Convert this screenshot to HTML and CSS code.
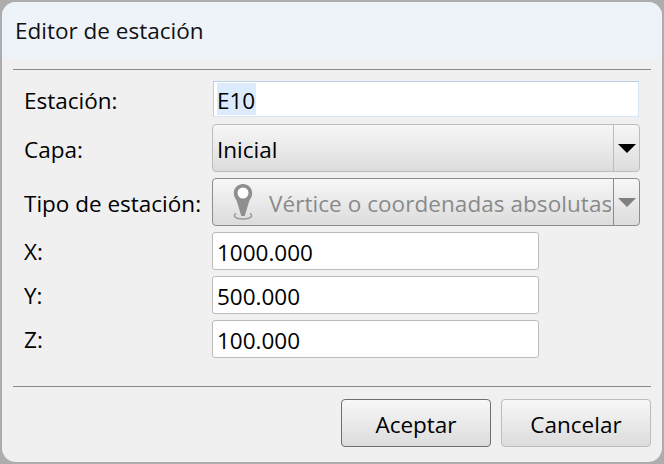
FILE: index.html
```html
<!DOCTYPE html>
<html lang="es">

<head>
    <meta charset="UTF-8">
    <title>Editor de estación</title>
    <link rel="stylesheet" href="styles.css">
</head>

<body>
    <div class="dialog">
        <div class="dialog-title">Editor de estación</div>

        <div class="dialog-body">
            <hr class="rule">

            <div class="form">
                <label class="field-label">Estación:</label>
                <div class="station-input"><span class="selected-text">E10</span></div>

                <label class="field-label field-label-tall">Capa:</label>
                <div class="combo">
                    <span class="combo-value">Inicial</span>
                    <span class="combo-arrow"><span class="arrow"></span></span>
                </div>

                <label class="field-label field-label-tall">Tipo de estación:</label>
                <div class="combo combo-disabled">
                    <span class="combo-value">
                        <svg class="pin" width="24" height="38" viewBox="0 0 24 38">
                            <path d="M12 1C6.800 1 2.800 5 2.800 10.200c0 3 1.300 5 2.800 7.300L10.300 33h3.400l4.700-15.500c1.500-2.300 2.800-4.300 2.800-7.300C21.200 5 17.200 1 12 1z" fill="#8f8f8f"/>
                            <circle cx="12" cy="10" r="5.500" fill="#fff"/>
                            <path d="M5 30.500c-2.800 1.400-2.500 5.500 7 5.500s9.800-4.100 7-5.500" fill="none" stroke="#9c9c9c" stroke-width="1.500"/>
                        </svg>
                        <span class="combo-text">Vértice o coordenadas absolutas</span>
                    </span>
                    <span class="combo-arrow"><span class="arrow"></span></span>
                </div>

                <label class="field-label">X:</label>
                <div class="number-input">1000.000</div>

                <label class="field-label">Y:</label>
                <div class="number-input">500.000</div>

                <label class="field-label">Z:</label>
                <div class="number-input">100.000</div>
            </div>

            <hr class="rule rule-bottom">

            <div class="buttons">
                <button class="btn btn-default">Aceptar</button>
                <button class="btn">Cancelar</button>
            </div>
        </div>
    </div>
</body>

</html>
```

FILE: styles.css
```css
* {
    box-sizing: border-box;
    margin: 0;
    padding: 0;
}

html,
body {
    width: 664px;
    height: 464px;
    overflow: hidden;
}

body {
    background: #adadad;
    font-family: 'Open Sans', 'Noto Sans', sans-serif;
    font-size: 22.5px;
    color: #000;
    padding: 2px;
}

.dialog {
    height: 100%;
    border-radius: 14px;
    background: #f0f0f0;
    overflow: hidden;
    display: flex;
    flex-direction: column;
}

.dialog-title {
    height: 56px;
    padding: 14px 0 0 13px;
    line-height: 30px;
    background: #eef3fa;
    color: #111;
}

.dialog-body {
    flex: 1;
    padding: 11px 11px 0 11px;
}

.rule {
    border: none;
    border-top: 1px solid #8a8a8a;
}

/* Form */
.form {
    display: grid;
    grid-template-columns: 188px minmax(0, 1fr);
    grid-template-rows: 37px 48px 48px 38px 38px 38px;
    row-gap: 6px;
    margin: 11px 11px 0 11px;
    align-items: center;
}

.field-label {
    line-height: 30px;
    padding-top: 2px;
}

.field-label-tall {
    padding-top: 4px;
}

.station-input {
    align-self: start;
    height: 36px;
    margin: 0 1px;
    background: #fff;
    border: 1px solid #d7e6f7;
    border-top-color: #b8cde6;
    border-left-color: #b8cde6;
    padding: 1px 3px;
    line-height: 35px;
}

.selected-text {
    display: block;
    width: 39px;
    height: 32px;
    background: #dcebfc;
}

.combo {
    height: 48px;
    display: flex;
    border: 1px solid #bcbcbc;
    border-radius: 4px;
    background: linear-gradient(#f7f7f7, #dcdcdc);
}

.combo-value {
    flex: 1;
    min-width: 0;
    display: flex;
    align-items: center;
    padding-left: 4px;
    padding-right: 2px;
    padding-top: 2px;
    overflow: hidden;
    white-space: nowrap;
}

.combo-arrow {
    flex: none;
    width: 26px;
    display: flex;
    align-items: center;
    justify-content: center;
    border-left: 1px solid #bcbcbc;
}

.arrow {
    border-left: 9px solid transparent;
    border-right: 9px solid transparent;
    border-top: 9px solid #000;
}

.combo-disabled {
    border-color: #8c8c8c;
    color: #8a8a8a;
}

.combo-disabled .combo-value {
    padding-left: 18px;
}

.combo-disabled .combo-arrow {
    border-left-color: #8c8c8c;
}

.combo-disabled .arrow {
    border-top-color: #808080;
}

.pin {
    flex: none;
    margin: -2px 14px 0 0;
}

.combo-text {
    overflow: hidden;
    letter-spacing: 0.06px;
}

.number-input {
    width: 327px;
    height: 38px;
    background: #fff;
    border: 1px solid #bcbcbc;
    border-radius: 3px;
    padding-left: 4px;
    line-height: 38px;
    padding-top: 1px;
}

.rule-bottom {
    margin-top: 28px;
}

/* Buttons */
.buttons {
    display: flex;
    justify-content: flex-end;
    gap: 10px;
    margin-top: 12px;
}

.btn {
    width: 150px;
    height: 48px;
    border: 1px solid #bcbcbc;
    border-radius: 4px;
    background: linear-gradient(#f7f7f7, #dcdcdc);
    font: inherit;
    color: #000;
    padding-top: 2px;
}

.btn-default {
    border-color: #6e6e6e;
}
```
